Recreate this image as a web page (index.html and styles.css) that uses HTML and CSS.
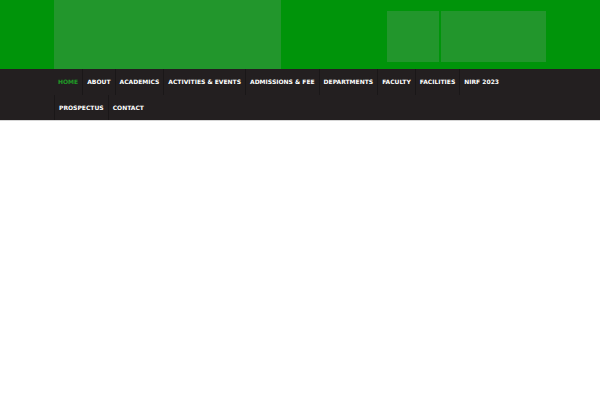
FILE: index.html
```html
<!DOCTYPE html>
<html>
<head>
<meta charset="utf-8">
<link rel="stylesheet" href="styles.css">
</head>
<body>
<header class="top">
  <div class="wrap top-inner">
    <div class="logo"></div>
    <div class="ads">
      <div class="ad ad-small"></div>
      <div class="ad ad-large"></div>
    </div>
  </div>
</header>
<nav class="nav">
  <ul class="wrap menu">
    <li class="active"><a>HOME</a></li>
    <li><a>ABOUT</a></li>
    <li><a>ACADEMICS</a></li>
    <li><a>ACTIVITIES &amp; EVENTS</a></li>
    <li><a>ADMISSIONS &amp; FEE</a></li>
    <li><a>DEPARTMENTS</a></li>
    <li><a>FACULTY</a></li>
    <li><a>FACILITIES</a></li>
    <li><a>NIRF 2023</a></li>
    <li><a>PROSPECTUS</a></li>
    <li><a>CONTACT</a></li>
  </ul>
</nav>
</body>
</html>
```
FILE: styles.css
```css
html, body {
  margin: 0;
  padding: 0;
  background: #ffffff;
  font-family: "DejaVu Sans", sans-serif;
}
.wrap {
  width: 492px;
  margin: 0 auto;
}
.top {
  background: #00940a;
  height: 69px;
}
.top-inner {
  display: flex;
  justify-content: space-between;
  height: 69px;
}
.logo {
  width: 227px;
  height: 69px;
  background: #22962c;
}
.ads {
  display: flex;
  gap: 2px;
  padding-top: 11px;
}
.ad {
  height: 51px;
  background: #22962c;
}
.ad-small { width: 52px; }
.ad-large { width: 105px; }
.nav {
  background: #231f20;
  border-bottom: 1px solid #d6d6d6;
}
.menu {
  list-style: none;
  padding: 0;
  margin: 0 auto;
  display: flex;
  flex-wrap: wrap;
}
.menu li {
  border-left: 1px solid #1a1718;
  line-height: 25.5px;
  height: 25.5px;
}
.menu li:first-child {
  border-left: 0;
}
.menu a {
  display: block;
  padding: 0 4px;
  color: #ffffff;
  font-size: 6px;
  font-weight: bold;
}
.menu li.active a {
  color: #1f9a26;
}
```
